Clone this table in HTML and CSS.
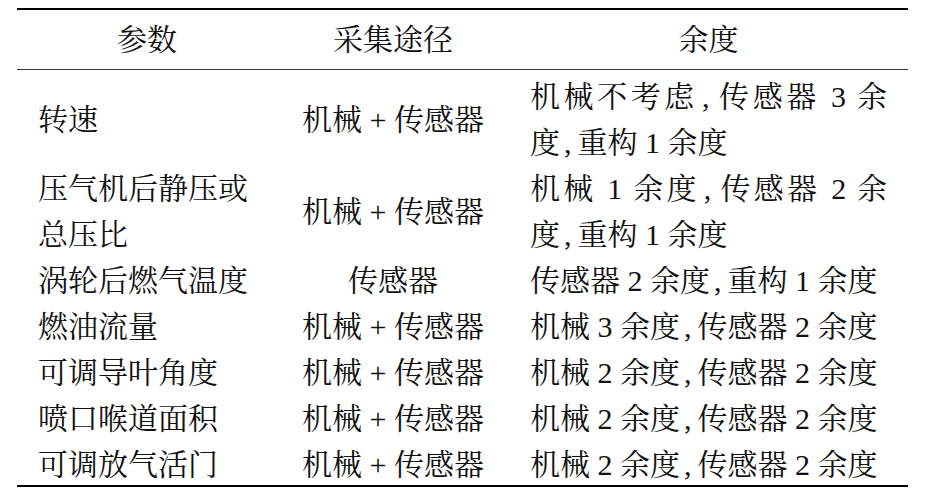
FILE: index.html
```html
<!DOCTYPE html>
<html lang="zh-CN">
<head>
<meta charset="utf-8">
<link rel="stylesheet" href="styles.css">
</head>
<body>
<div class="table">
  <div class="head">
    <div class="c1">参数</div>
    <div class="c2">采集途径</div>
    <div class="c3">余度</div>
  </div>
  <div class="body">
    <div class="c1"><span class="ln">转速</span></div>
    <div class="c2">机械 + 传感器</div>
    <div class="c3"><span class="ln full">机械不考虑<span class="cm">,</span>传感器 3 余</span><span class="ln">度<span class="cm">,</span>重构 1 余度</span></div>

    <div class="c1"><span class="ln">压气机后静压或</span><span class="ln">总压比</span></div>
    <div class="c2">机械 + 传感器</div>
    <div class="c3"><span class="ln full">机械 1 余度<span class="cm">,</span>传感器 2 余</span><span class="ln">度<span class="cm">,</span>重构 1 余度</span></div>

    <div class="c1">涡轮后燃气温度</div>
    <div class="c2">传感器</div>
    <div class="c3">传感器 2 余度<span class="cm">,</span>重构 1 余度</div>

    <div class="c1">燃油流量</div>
    <div class="c2">机械 + 传感器</div>
    <div class="c3">机械 3 余度<span class="cm">,</span>传感器 2 余度</div>

    <div class="c1">可调导叶角度</div>
    <div class="c2">机械 + 传感器</div>
    <div class="c3">机械 2 余度<span class="cm">,</span>传感器 2 余度</div>

    <div class="c1">喷口喉道面积</div>
    <div class="c2">机械 + 传感器</div>
    <div class="c3">机械 2 余度<span class="cm">,</span>传感器 2 余度</div>

    <div class="c1">可调放气活门</div>
    <div class="c2">机械 + 传感器</div>
    <div class="c3">机械 2 余度<span class="cm">,</span>传感器 2 余度</div>
  </div>
</div>
</body>
</html>
```

FILE: styles.css
```css
html, body {
  margin: 0;
  padding: 0;
  background: #fff;
}
body {
  font-family: "Liberation Serif", "Noto Serif CJK SC", "Noto Sans CJK SC", serif;
  font-size: 30px;
  color: #111;
}
.table {
  width: 891px;
  margin: 8px 0 0 17px;
  border-top: 2px solid #000;
  border-bottom: 2px solid #000;
}
.head {
  display: grid;
  grid-template-columns: 260px 232px 399px;
  height: 59px;
  line-height: 59px;
  border-bottom: 1px solid #333;
  text-align: center;
}
.body {
  display: grid;
  grid-template-columns: 260px 232px 399px;
  line-height: 46px;
  padding-top: 4px;
  margin-bottom: -3px;
}
.body .c1 {
  padding: 0 21px;
  align-self: center;
}
.body .c2 {
  text-align: center;
  align-self: center;
}
.body .c3 {
  padding: 0 21px;
  text-align: left;
}
.ln {
  display: block;
  white-space: nowrap;
}
.ln.full {
  text-align: justify;
  text-align-last: justify;
}
.cm {
  margin: 0 6px 0 4px;
}
```
